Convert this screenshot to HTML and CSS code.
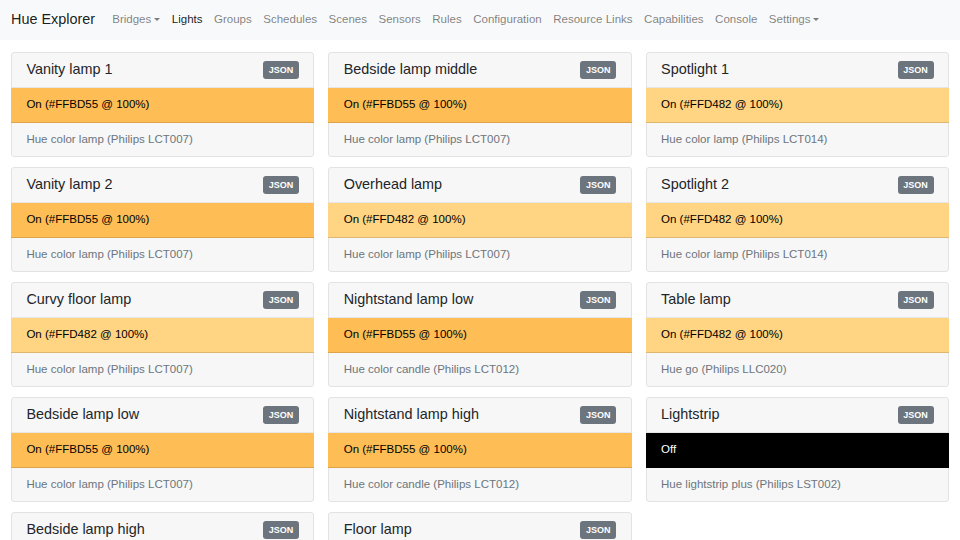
FILE: index.html
```html
<!DOCTYPE html>
<html lang="en">
<head>
<meta charset="utf-8">
<title>Hue Explorer</title>
<link rel="stylesheet" href="styles.css">
</head>
<body>
<nav class="navbar">
  <span class="brand">Hue Explorer</span>
  <ul class="nav">
    <li class="nav-link dropdown">Bridges</li>
    <li class="nav-link active">Lights</li>
    <li class="nav-link">Groups</li>
    <li class="nav-link">Schedules</li>
    <li class="nav-link">Scenes</li>
    <li class="nav-link">Sensors</li>
    <li class="nav-link">Rules</li>
    <li class="nav-link">Configuration</li>
    <li class="nav-link">Resource Links</li>
    <li class="nav-link">Capabilities</li>
    <li class="nav-link">Console</li>
    <li class="nav-link dropdown">Settings</li>
  </ul>
</nav>
<main class="grid">
  <div class="card"><div class="card-header"><h5 class="title">Vanity lamp 1</h5><span class="badge">JSON</span></div><div class="status s-bd">On (#FFBD55 @ 100%)</div><div class="model">Hue color lamp (Philips LCT007)</div></div>
  <div class="card"><div class="card-header"><h5 class="title">Bedside lamp middle</h5><span class="badge">JSON</span></div><div class="status s-bd">On (#FFBD55 @ 100%)</div><div class="model">Hue color lamp (Philips LCT007)</div></div>
  <div class="card"><div class="card-header"><h5 class="title">Spotlight 1</h5><span class="badge">JSON</span></div><div class="status s-d4">On (#FFD482 @ 100%)</div><div class="model">Hue color lamp (Philips LCT014)</div></div>

  <div class="card"><div class="card-header"><h5 class="title">Vanity lamp 2</h5><span class="badge">JSON</span></div><div class="status s-bd">On (#FFBD55 @ 100%)</div><div class="model">Hue color lamp (Philips LCT007)</div></div>
  <div class="card"><div class="card-header"><h5 class="title">Overhead lamp</h5><span class="badge">JSON</span></div><div class="status s-d4">On (#FFD482 @ 100%)</div><div class="model">Hue color lamp (Philips LCT007)</div></div>
  <div class="card"><div class="card-header"><h5 class="title">Spotlight 2</h5><span class="badge">JSON</span></div><div class="status s-d4">On (#FFD482 @ 100%)</div><div class="model">Hue color lamp (Philips LCT014)</div></div>

  <div class="card"><div class="card-header"><h5 class="title">Curvy floor lamp</h5><span class="badge">JSON</span></div><div class="status s-d4">On (#FFD482 @ 100%)</div><div class="model">Hue color lamp (Philips LCT007)</div></div>
  <div class="card"><div class="card-header"><h5 class="title">Nightstand lamp low</h5><span class="badge">JSON</span></div><div class="status s-bd">On (#FFBD55 @ 100%)</div><div class="model">Hue color candle (Philips LCT012)</div></div>
  <div class="card"><div class="card-header"><h5 class="title">Table lamp</h5><span class="badge">JSON</span></div><div class="status s-d4">On (#FFD482 @ 100%)</div><div class="model">Hue go (Philips LLC020)</div></div>

  <div class="card"><div class="card-header"><h5 class="title">Bedside lamp low</h5><span class="badge">JSON</span></div><div class="status s-bd">On (#FFBD55 @ 100%)</div><div class="model">Hue color lamp (Philips LCT007)</div></div>
  <div class="card"><div class="card-header"><h5 class="title">Nightstand lamp high</h5><span class="badge">JSON</span></div><div class="status s-bd">On (#FFBD55 @ 100%)</div><div class="model">Hue color candle (Philips LCT012)</div></div>
  <div class="card"><div class="card-header"><h5 class="title">Lightstrip</h5><span class="badge">JSON</span></div><div class="status s-off">Off</div><div class="model">Hue lightstrip plus (Philips LST002)</div></div>

  <div class="card"><div class="card-header"><h5 class="title">Bedside lamp high</h5><span class="badge">JSON</span></div><div class="status s-bd">On (#FFBD55 @ 100%)</div><div class="model">Hue color lamp (Philips LCT007)</div></div>
  <div class="card"><div class="card-header"><h5 class="title">Floor lamp</h5><span class="badge">JSON</span></div><div class="status s-d4">On (#FFD482 @ 100%)</div><div class="model">Hue color lamp (Philips LCT007)</div></div>
</main>
</body>
</html>
```

FILE: styles.css
```css
html, body {
  height: 100%;
  overflow: hidden;
}
body {
  margin: 0;
  background: #fff;
  color: #212529;
  font-family: "Liberation Sans", Arial, sans-serif;
  font-size: 11.52px;
  line-height: 1.5;
}
.navbar {
  display: flex;
  align-items: center;
  height: 40px;
  padding: 0 11px;
  background: #f8f9fa;
  box-sizing: border-box;
}
.brand {
  font-size: 14.4px;
  color: rgba(0, 0, 0, 0.9);
  margin-right: 11.5px;
  line-height: 1.5;
}
.nav {
  display: flex;
  list-style: none;
  margin: 0;
  padding: 0;
}
.nav-link {
  padding: 0 5.76px;
  color: rgba(0, 0, 0, 0.5);
  white-space: nowrap;
}
.nav-link.active {
  color: rgba(0, 0, 0, 0.9);
}
.dropdown::after {
  content: "";
  display: inline-block;
  margin-left: 3px;
  vertical-align: 2px;
  border-top: 3.5px solid;
  border-right: 3.5px solid transparent;
  border-left: 3.5px solid transparent;
}
.grid {
  display: grid;
  grid-template-columns: repeat(3, 1fr);
  column-gap: 14px;
  row-gap: 10px;
  padding: 12px 11px;
}
.card {
  background: #f7f7f7;
  border: 1px solid #e3e3e3;
  border-radius: 3px;
}
.card-header {
  display: flex;
  align-items: center;
  justify-content: space-between;
  height: 35px;
  padding: 0 14.4px;
  border-bottom: 1px solid #e6e6e6;
  box-sizing: border-box;
}
.title {
  margin: 0;
  font-size: 14.4px;
  font-weight: 400;
  line-height: 1.2;
}
.badge {
  display: inline-flex;
  align-items: center;
  justify-content: center;
  width: 36px;
  height: 18px;
  border-radius: 3px;
  background: #6c757d;
  color: #fff;
  font-size: 9px;
  font-weight: 700;
  line-height: 1;
}
.status {
  margin: 0 -1px;
  height: 35px;
  padding: 0 15.4px;
  display: flex;
  align-items: center;
  border-bottom: 1px solid rgba(0, 0, 0, 0.13);
  box-sizing: border-box;
  color: #000;
}
.s-bd { background: #ffbd55; }
.s-d4 { background: #ffd482; }
.s-off { background: #000; color: #fff; }
.model {
  height: 33px;
  padding: 0 14.4px;
  display: flex;
  align-items: center;
  color: #6c757d;
}
```
